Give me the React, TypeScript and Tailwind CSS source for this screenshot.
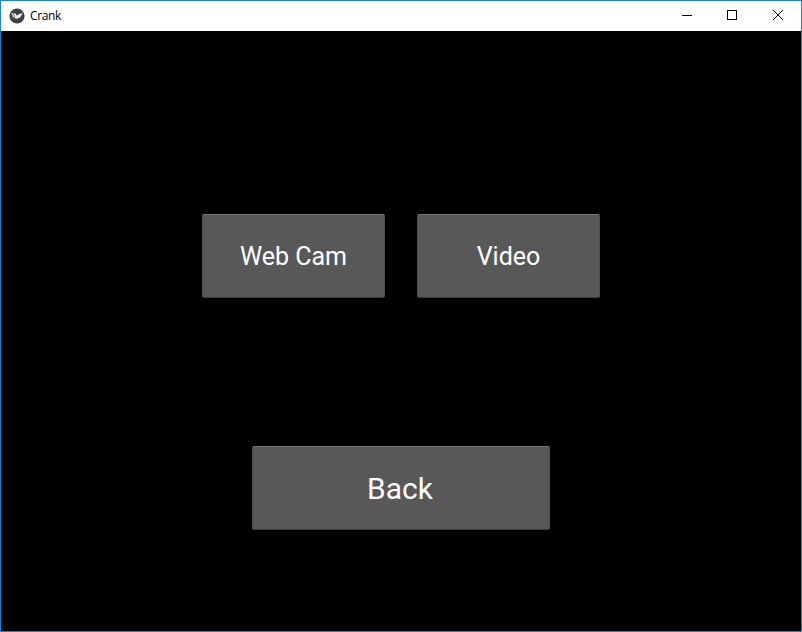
import React from "react";

function KivyLogo() {
  return (
    <svg width="16" height="16" viewBox="0 0 16 16" className="shrink-0" aria-hidden="true">
      <circle cx="8" cy="8" r="7.6" fill="#3f4245" />
      <path d="M2.4 5 4.4 4.9 5.4 9.8 3.8 9.6Z" fill="#c9cacb" />
      <path d="M5 4.9 6.6 5.8 8.2 8.2 7.6 10.8 6 10.2Z" fill="#f2f2f2" />
      <path d="M7.8 6.8 9 7.2 10 6 13.9 4.9 12.6 7 10.8 10 9.6 9.4 8 11.4Z" fill="#f2f2f2" />
    </svg>
  );
}

function WindowControls() {
  return (
    <div className="flex h-full text-black" aria-hidden="true">
      <svg width="46" height="30" shapeRendering="crispEdges">
        <rect x="18" y="14" width="10" height="1" fill="currentColor" />
      </svg>
      <svg width="46" height="30" shapeRendering="crispEdges">
        <rect x="17.5" y="9.5" width="9" height="9" fill="none" stroke="currentColor" />
      </svg>
      <svg width="45" height="30">
        <path d="M17 9 27 19M27 9 17 19" fill="none" stroke="currentColor" strokeWidth="1" />
      </svg>
    </div>
  );
}

function KivyButton({ label, className }: { label: string; className: string }) {
  return (
    <button
      className={`flex items-center justify-center rounded-[2px] border border-x-[#505050] border-t-[#757575] border-b-[#3c3c3c] bg-[#585858] text-white ${className}`}
    >
      {label}
    </button>
  );
}

export default function App() {
  return (
    <div className="flex h-[632px] w-[802px] flex-col border border-[#1883d7] bg-black font-[Roboto,sans-serif]">
      <header className="flex h-[30px] shrink-0 items-center justify-between bg-white pl-2">
        <div className="flex items-center gap-[5px]">
          <KivyLogo />
          <span className="font-['Open_Sans','Noto_Sans',sans-serif] text-[12px] leading-4 tracking-[-0.4px] text-black">
            Crank
          </span>
        </div>
        <WindowControls />
      </header>
      <main className="flex flex-1 flex-col items-center pt-[183px]">
        <div className="flex gap-8">
          <KivyButton label="Web Cam" className="h-[84px] w-[183px] pt-[2px] text-[25px]" />
          <KivyButton label="Video" className="h-[84px] w-[183px] pt-[2px] text-[25px]" />
        </div>
        <KivyButton label="Back" className="mt-[148px] h-[84px] w-[298px] pr-[2px] text-[30px]" />
      </main>
    </div>
  );
}
